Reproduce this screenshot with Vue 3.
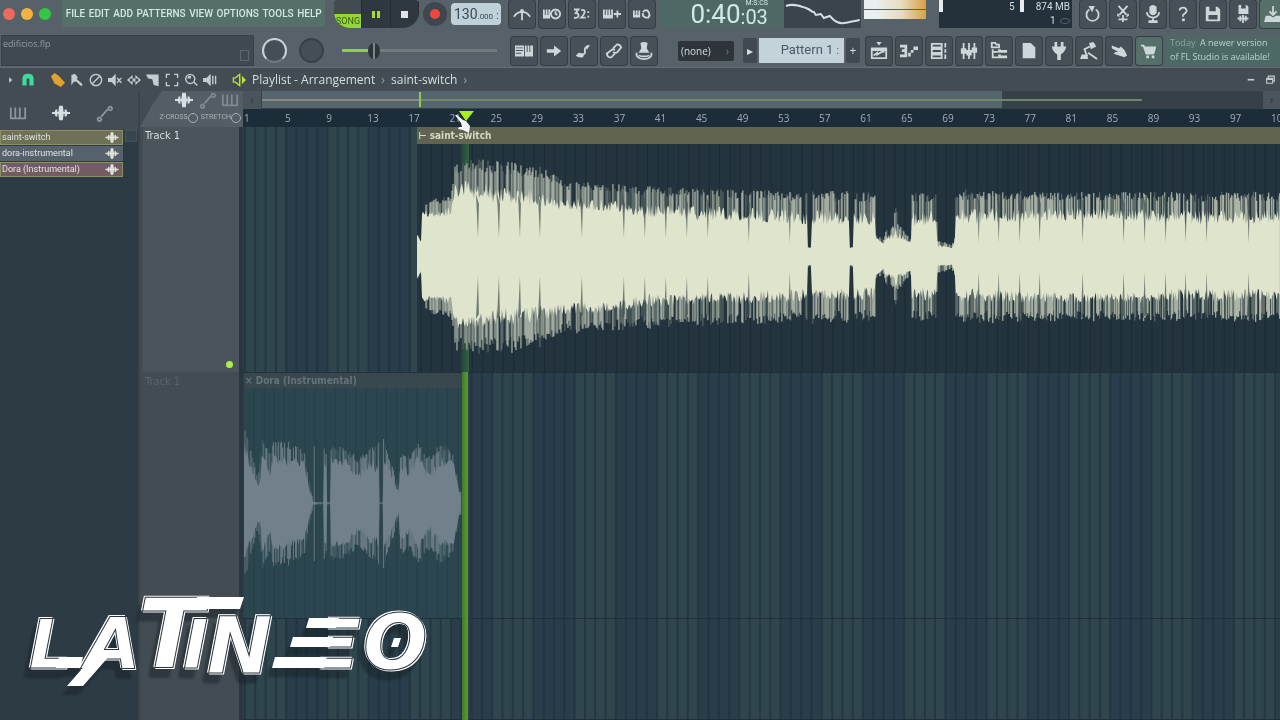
<template>
    <div class="app">
        <header class="toolbar">
            <div class="toolbar-row toolbar-row--top">
                <div class="lights">
                    <button class="light light--red" aria-label="Close"></button>
                    <button class="light light--amber" aria-label="Minimize"></button>
                    <button class="light light--green" aria-label="Zoom"></button>
                </div>
                <nav class="menu">
                    <button v-for="item in menu" :key="item">{{ item }}</button>
                </nav>
                <div class="transport">
                    <button class="song"><span>SONG</span></button>
                    <button class="pause" aria-label="Pause"><i></i><i></i></button>
                    <button class="stop" aria-label="Stop"><i></i></button>
                </div>
                <button class="record" aria-label="Record"></button>
                <div class="tempo"><span>130</span><small>.000</small><b>:</b></div>
                <div class="tools tools--first">
                    <button v-for="name in topTools" :key="name" :aria-label="name" class="tool">
                        <Icon :name="name" />
                    </button>
                </div>
                <div class="clock">
                    <span class="clock-main">0:40</span>
                    <span class="clock-side"><small>M:S:CS</small>:03</span>
                </div>
                <svg class="scope" viewBox="0 0 77 28">
                    <path d="M2 6C9 3 16 6 22 8S27 12 30 12L32 15L37 14L40 18L46 16L50 20C57 26 64 22 76 20" />
                </svg>
                <div class="meter"><i></i><i></i></div>
                <div class="stats">
                    <span class="stats-cpu"><i></i><b>5</b></span>
                    <span class="stats-mem"><i></i><b>874 MB</b><b>1 <em></em></b></span>
                </div>
                <div class="tools">
                    <button
                        v-for="name in fileTools"
                        :key="name"
                        :aria-label="name"
                        :class="['tool', { 'tool--teal': name === 'download' }]"
                    >
                        <Icon :name="name" />
                    </button>
                </div>
            </div>

            <div class="toolbar-row toolbar-row--bottom">
                <div class="hint"><span>edificios.flp</span><i></i></div>
                <div class="knobs"><i class="knob knob--lit"></i><i class="knob"></i></div>
                <input v-model="volume" class="slider" type="range" aria-label="Main volume" />
                <div class="tools tools--first">
                    <button v-for="name in editTools" :key="name" :aria-label="name" class="tool">
                        <Icon :name="name" />
                    </button>
                </div>
                <div class="snap">
                    <select aria-label="Snap">
                        <option>(none)</option>
                    </select>
                    <i>›</i>
                </div>
                <div class="pattern">
                    <button aria-label="Pattern menu">▸</button>
                    <output>Pattern 1<small>:</small></output>
                    <button aria-label="Add pattern">+</button>
                </div>
                <div class="tools">
                    <button
                        v-for="name in windowTools"
                        :key="name"
                        :aria-label="name"
                        :class="['tool', { 'tool--teal': name === 'cart' }]"
                    >
                        <Icon :name="name" />
                    </button>
                </div>
                <p class="news"><span>Today</span>&nbsp; A newer version<br />of FL Studio is available!</p>
            </div>
        </header>

        <div class="titlebar">
            <button
                v-for="tool in playlistTools"
                :key="tool.name"
                :aria-label="tool.name"
                :class="['mini', tool.tone]"
            >
                <Icon :name="tool.name" />
            </button>
            <h1>Playlist - Arrangement <i>›</i> saint-switch <i>›</i></h1>
            <div class="window-buttons">
                <button class="mini" aria-label="Minimize"><Icon name="minimize" /></button>
                <button class="mini" aria-label="Restore"><Icon name="restore" /></button>
            </div>
        </div>

        <main class="playlist">
            <aside class="picker">
                <div class="picker-tabs">
                    <button class="dim" aria-label="Patterns"><Icon name="keys" /></button>
                    <button aria-label="Audio"><Icon name="wave" /></button>
                    <button class="dim" aria-label="Automation"><Icon name="automation" /></button>
                </div>
                <ul>
                    <li v-for="clip in clips" :key="clip.name" :class="`clip-item clip-item--${clip.tone}`">
                        <span>{{ clip.name }}</span>
                        <Icon name="wave" />
                    </li>
                </ul>
                <div class="picker-scroll"></div>
            </aside>

            <section class="tracks">
                <div class="track-tools">
                    <div class="track-tabs">
                        <button aria-label="Audio"><Icon name="wave" /></button>
                        <button class="dim" aria-label="Automation"><Icon name="automation" /></button>
                        <button class="dim" aria-label="Patterns"><Icon name="keys" /></button>
                    </div>
                    <div class="track-options">
                        <label>Z-CROSS<input type="checkbox" /></label>
                        <label>STRETCH<input type="checkbox" /></label>
                    </div>
                </div>
                <div class="track"><span>Track 1</span><i></i></div>
                <div class="track track--off"><span>Track 1</span></div>
                <div class="track track--off"></div>
            </section>

            <section class="timeline">
                <div class="scrollbar">
                    <button aria-label="Scroll left">‹</button>
                    <div class="scroll-track">
                        <div class="scroll-thumb"></div>
                        <i class="overview overview--past"></i>
                        <i class="overview overview--next"></i>
                        <i class="overview-mark"></i>
                    </div>
                    <button aria-label="Scroll right">›</button>
                </div>
                <div class="ruler">
                    <span v-for="bar in bars" :key="bar">{{ bar }}</span>
                </div>
                <div class="lanes">
                    <svg class="grid" viewBox="0 0 1037 100" preserveAspectRatio="none">
                        <rect v-for="n in 13" :key="n" :x="2 + (n - 1) * 82.4" width="41.2" height="100" />
                        <path :d="gridLines" />
                    </svg>
                    <div class="lane">
                        <article class="clip clip--main">
                            <h2>⊢ saint-switch</h2>
                            <svg viewBox="0 0 863 228" preserveAspectRatio="none">
                                <path class="shade" :d="mainGrid" />
                                <path class="soft" :d="mainWave.soft" />
                                <path class="spikes" :d="mainWave.spikes" />
                                <path class="body" :d="mainWave.body" />
                                <path class="dips" :d="mainDips" />
                            </svg>
                        </article>
                    </div>
                    <div class="lane">
                        <article class="clip clip--muted">
                            <h2>× Dora (Instrumental)</h2>
                            <svg viewBox="0 0 220 229" preserveAspectRatio="none">
                                <path class="shade" :d="mutedGrid" />
                                <path class="soft" :d="mutedWave.soft" />
                                <path class="spikes" :d="mutedWave.spikes" />
                                <path class="body" :d="mutedWave.body" />
                            </svg>
                        </article>
                    </div>
                    <div class="lane"></div>
                    <div class="playhead">
                        <i class="playhead-over"></i>
                        <i class="playhead-line"></i>
                    </div>
                </div>
                <svg class="playhead-tip" viewBox="0 0 24 24">
                    <path d="M8 2H23L15 12Z" fill="#a6f01c" />
                    <path d="M4 6L6 6L12 11L15 12L19 17L18 24L12 21L7 20L8 18L11 18L10 14Z" fill="#f2f5f5" />
                </svg>
            </section>
        </main>

        <svg class="logo" viewBox="0 0 420 110" role="img" aria-label="Latineo">
            <text>
                <tspan x="4" y="80" font-size="68">L</tspan>
                <tspan x="60" y="80" font-size="72">A</tspan>
                <tspan x="113" y="80" font-size="96">T</tspan>
                <tspan x="158" y="80" font-size="68">I</tspan>
                <tspan x="182" y="85" font-size="78">N</tspan>
                <tspan x="293" y="80" font-size="68">Ξ</tspan>
                <tspan x="338" y="81" font-size="76">O</tspan>
            </text>
            <path
                class="swash"
                d="M34 69H58L55 80H31ZM42 98H58L86 66L70 66ZM172 9H219L215 21H169ZM284 30H314L311 40H281ZM268 49H308L305 59H265ZM250 69H302L299 80H247ZM369 50H376L373 59H366Z"
            />
        </svg>
    </div>
</template>

<script setup>
import { h, ref } from 'vue'

const volume = ref(18)

const menu = ['FILE', 'EDIT', 'ADD', 'PATTERNS', 'VIEW', 'OPTIONS', 'TOOLS', 'HELP']
const topTools = ['metronome', 'wait', 'countdown', 'stepadd', 'loop']
const fileTools = ['undo', 'cut', 'mic', 'help', 'save', 'render', 'download']
const editTools = ['typing', 'arrow', 'slide', 'link', 'stamp']
const windowTools = ['playlist', 'pianoroll', 'rack', 'mixer', 'browser', 'page', 'plugin', 'lamp', 'touch', 'cart']

const playlistTools = [
    { name: 'caret', tone: 'mini--caret' },
    { name: 'magnet', tone: 'mini--green' },
    { name: 'pencil', tone: 'mini--orange' },
    { name: 'brush' },
    { name: 'ban' },
    { name: 'mute' },
    { name: 'slip' },
    { name: 'slice' },
    { name: 'select' },
    { name: 'zoom' },
    { name: 'playback' },
    { name: 'speaker', tone: 'mini--lime' }
]

const clips = [
    { name: 'saint-switch', tone: 'olive' },
    { name: 'dora-instrumental', tone: 'slate' },
    { name: 'Dora (Instrumental)', tone: 'rose' }
]

const bars = Array.from({ length: 26 }, (_, i) => 1 + i * 4)

// [filled path, stroked path] on a 20 x 20 box
const icons = {
    metronome: ['M8 5H12V9H8Z', 'M10 5V17M1 13Q5 7 10 8Q15 7 19 13'],
    wait: ['M0 5H2V11H3V5H5V11H6V5H8V15H0Z', 'M14 5A5 5 0 1 1 13.9 5M14 7V10L16 11'],
    countdown: ['', 'M1 5H6L3 9Q7 9 6 13Q4 15 1 14M9 6Q13 4 13 8Q12 11 9 14H14M17 7V9M17 12V14'],
    stepadd: ['M0 5H2V11H3V5H5V11H6V5H8V11H9V5H11V15H0Z', 'M12 10H20M16 6V14'],
    loop: ['M0 6H2V11H3V6H5V11H6V6H8V14H0Z', 'M11 8L13 6H16L18 9V12M19 11L17 14H14L11 12V9'],
    undo: ['M5 1L12 1L9 8Z', 'M6 5A6.8 6.8 0 1 0 13 5'],
    cut: ['', 'M5 1L14 11M15 1L6 11M6 12A1 1 0 1 1 5 10M14 12A1 1 0 1 0 15 10M10 11V19M5 16H15'],
    mic: ['M6 2Q10 -2 14 2V9Q10 14 6 9ZM5 17H15V20H5Z', 'M3 8Q4 14 10 14Q16 14 17 8M10 13V18'],
    help: ['M9 15H12V18H9Z', 'M6 6Q7 3 10 3Q14 3 14 7Q13 9 10 11V13'],
    save: ['M2 2H15L18 5V18H2ZM6 2V7H13V2ZM5 11V16H15V11Z', ''],
    render: ['M5 0H14L16 2V10H5ZM8 0V4H13V0Z', 'M10 11V20M4 15H16M7 12V18M13 12V18'],
    download: ['M2 12H7L10 14L13 12H18L20 19H0Z', 'M10 1V11M6 7L10 11L14 7'],
    typing: ['M11 4H13V11H14V4H16V11H17V4H20V16H11ZM0 4H10V16H0ZM1 6V7H9V6ZM1 9V10H9V9ZM1 12V13H7V12Z', ''],
    arrow: ['M2 8H10V4L18 10L10 16V12H2Z', ''],
    slide: ['M4 12L10 13L9 17Q3 18 1 15ZM12 5L17 3L13 9Z', 'M6 15Q12 14 11 10Q10 6 15 4'],
    link: ['', 'M9 7L13 3Q16 2 18 6L14 11Q11 13 9 11M11 9Q9 7 7 9L2 13Q3 18 7 17L11 13'],
    stamp: ['M6 1Q10 -1 14 1L13 7L16 12H4L7 7Z', 'M2 12Q0 18 10 19Q20 18 18 12M4 15Q10 17 16 15'],
    playlist: ['M7 0H13L10 4ZM1 6H19V10H1Z', 'M2 8V18H18V8M4 15L8 12V14L13 11H16'],
    pianoroll: ['M0 3H8V17H0V14H5V11H2V8H5V6H0ZM9 12H12V16H9ZM12 9H15V12H12ZM15 5H20V9H15Z', ''],
    rack: ['', 'M2 2H13V6H2ZM2 8H13V12H2ZM2 14H13V18H2ZM17 1V6M17 8V12M17 14V19'],
    mixer: ['', 'M4 1V19M10 1V19M16 1V19M2 8H6V12H2ZM8 10H12V14H8ZM14 7H18V11H14Z'],
    browser: ['M9 8H12V9H19V12H9ZM9 14H12V15H19V18H9Z', 'M2 1H6L7 3H10V6H2ZM3 8V17H9M3 11H9'],
    page: ['M3 1H12L17 6V18H3Z', ''],
    plugin: ['M5 0H8V5H12V0H15V5H18Q17 11 12 14V20H8V14Q3 11 2 5H5Z', ''],
    lamp: ['M10 1L15 0L18 5L12 8ZM2 14H8L9 19H0Z', 'M11 5L5 8L8 16M9 12L19 19'],
    touch: ['M2 4L10 7L12 5L16 9L19 15L16 17L10 15L4 13L6 11L9 11L2 7Z', ''],
    cart: ['M5 5H18L16 13H7ZM7 15H10V18H7ZM13 15H16V18H13Z', 'M1 4H4L7 13H15'],
    caret: ['M7 4L14 10L7 16Z', ''],
    magnet: ['M2 18V8Q2 1 10 1Q18 1 18 8V18H12V9Q10 6 8 9V18Z', ''],
    pencil: ['M0 5L5 0L11 4L20 14L14 20L5 15Z', 'M3 3L15 16'],
    brush: ['M2 3L7 1L11 6L10 9L18 16L16 19L9 12L5 13L2 18Z', ''],
    ban: ['', 'M10 2A8 8 0 1 1 9.9 2M5 15L15 5'],
    mute: ['M0 7H5L11 1V19L5 13H0Z', 'M13 7L19 14M19 7L13 14'],
    slip: ['M0 10L8 3V17ZM20 10L12 3V17ZM4 8H16V12H4Z', ''],
    slice: ['M0 2H18V19L11 17L9 9L3 8Z', ''],
    select: ['', 'M2 7V2H7M13 2H18V7M18 13V18H13M7 18H2V13'],
    zoom: ['M5 8H10V4Q5 3 5 8Z', 'M9 2A6.5 6.5 0 1 1 8.9 2M14 13L19 18'],
    playback: ['M0 7H5L11 1V19L5 13H0ZM13 4H15V16H13ZM17 4H19V16H17Z', ''],
    speaker: ['M14 4L20 10L14 16Z', 'M2 7H5L11 2V18L5 13H2Z'],
    minimize: ['M3 8H15V11H3Z', ''],
    restore: ['', 'M6 7V3H17V12H14M3 7H14V16H3ZM3 9H14'],
    keys: ['', 'M2 4V16H18V4M7 4V15M12 4V15'],
    wave: ['M0 9H3L4 6H6V9H7L8 2H12L13 9H14V6H16L17 9H20V11H17L16 14H14V11H13L12 18H8L7 11H6V14H4L3 11H0Z', ''],
    automation: ['', 'M5 15A2 2 0 1 1 4.9 15M7 14L14 6M17 3A2 2 0 1 1 16.9 3']
}

const Icon = ({ name }) =>
    h('svg', { viewBox: '0 0 20 20', width: 18, height: 18, 'aria-hidden': 'true' }, [
        h('path', { d: icons[name][0], fill: 'currentColor', 'fill-rule': 'evenodd' }),
        h('path', { d: icons[name][1], fill: 'none', stroke: 'currentColor', 'stroke-width': 2 })
    ])
Icon.props = ['name']

const lines = (start, width) => {
    let d = ''
    for (let x = start; x < width; x += 10.3) d += `M${x.toFixed(1)} 0V300`
    return d
}
const gridLines = lines(2, 1037)
const mainGrid = lines(4, 863)
const mutedGrid = lines(10, 220)

// linear interpolation through [x, solid, peak] points
const sample = (points, x, key) => {
    const i = points.findIndex(p => p[0] > x)
    if (i < 0) return points[points.length - 1][key]
    if (i === 0) return points[0][key]
    const [a, b] = [points[i - 1], points[i]]
    return a[key] + ((b[key] - a[key]) * (x - a[0])) / (b[0] - a[0])
}

const buildWave = (points, width, mid, seed) => {
    let state = seed
    const rand = () => {
        state = (state * 16807) % 2147483647
        return state / 2147483647
    }
    const top = []
    const bottom = []
    let soft = ''
    let spikes = ''
    for (let x = 0; x <= width; x += 1) {
        const solid = sample(points, x, 1)
        const peak = sample(points, x, 2)
        const up = solid + (peak - solid) * rand() * 0.45
        const down = solid + (peak - solid) * rand() * 0.4 - 1
        top.push(`${x} ${(mid - up).toFixed(1)}`)
        bottom.unshift(`${x} ${(mid + down).toFixed(1)}`)
        const reach = solid + (peak - solid) * (0.7 + rand() * 0.3)
        const line = `M${x} ${(mid - reach).toFixed(1)}V${(mid + reach * (0.94 + rand() * 0.08)).toFixed(1)}`
        const pick = rand()
        if (pick < 0.42) spikes += line
        else if (pick < 0.72) soft += line
    }
    return { body: `M${top.join('L')}L${bottom.join('L')}Z`, soft, spikes }
}

const mainWave = buildWave(
    [
        [0, 22, 24], [4, 15, 16], [5, 38, 56], [34, 40, 62], [38, 60, 92], [50, 60, 98],
        [80, 52, 97], [120, 50, 92], [150, 46, 76], [190, 46, 74], [230, 38, 71], [310, 36, 68],
        [390, 32, 66], [391, 9, 10], [394, 9, 10], [395, 32, 66], [432, 32, 66], [433, 9, 10],
        [436, 9, 10], [437, 32, 65], [458, 30, 65], [459, 18, 22], [467, 12, 18], [469, 17, 28],
        [477, 18, 32], [479, 20, 58], [481, 18, 34], [494, 14, 18], [495, 30, 65], [519, 32, 64],
        [521, 9, 18], [535, 8, 12], [538, 16, 20], [539, 32, 68], [640, 36, 65], [720, 36, 65],
        [760, 32, 65], [863, 33, 66]
    ],
    863, 113, 4127
)

const mutedWave = buildWave(
    [
        [0, 50, 78], [8, 30, 52], [14, 17, 24], [17, 17, 50], [18, 46, 66], [26, 26, 50],
        [30, 42, 62], [46, 36, 62], [60, 34, 56], [66, 10, 24], [70, 1, 2], [71, 1, 62],
        [72, 1, 1], [80, 1, 1], [81, 34, 58], [83, 34, 50], [84, 1, 1], [87, 1, 1],
        [88, 38, 58], [103, 38, 56], [116, 20, 46], [130, 36, 58], [134, 24, 60], [136, 40, 66],
        [137, 1, 1], [140, 1, 1], [141, 40, 66], [156, 10, 18], [158, 34, 50], [168, 24, 52],
        [176, 42, 62], [186, 20, 46], [200, 36, 62], [212, 36, 50], [218, 8, 12], [220, 8, 12]
    ],
    219, 115, 991
)

const mainDips = [59, 80, 101, 121, 163, 205, 226, 247, 268, 289, 330, 371, 560, 580, 601, 621, 664, 705, 726, 747, 767, 788, 830]
    .map(x => `M${x} 50L${x + 2} ${x < 300 ? 94 : 99}L${x + 3} 60ZM${x} 175L${x + 2} ${x < 300 ? 132 : 128}L${x + 3} 170Z`)
    .join('')
</script>

<style>
body {
    background: #2f3d47;
    margin: 0;
}
</style>

<style scoped>
.app {
    position: relative;
    display: flex;
    flex-direction: column;
    height: 100vh;
    min-height: 640px;
    overflow: hidden;
    color: #d5dfe1;
    font: 12px/16px "Open Sans", sans-serif;
    background: #2f3d47;
}

button,
input,
select {
    padding: 0;
    border: 0;
    margin: 0;
    font: inherit;
    color: inherit;
    background: none;
}

.toolbar {
    background: #566168;
    border-bottom: 1px solid #626d73;
}

.toolbar-row {
    display: flex;
    align-items: center;
}

.toolbar-row--top {
    height: 34px;
    align-items: flex-start;
}

.toolbar-row--bottom {
    height: 33px;
}

.lights {
    display: flex;
    gap: 6px;
    width: 62px;
    padding: 8px 0 0 3px;
    box-sizing: border-box;
}

.light {
    width: 12px;
    height: 12px;
    border-radius: 50%;
}

.light--red {
    background: #ed6a5e;
}

.light--amber {
    background: #f4b23f;
}

.light--green {
    background: #32c748;
}

.menu {
    display: flex;
    justify-content: space-between;
    width: 264px;
    height: 27px;
    padding: 0 3px 0 4px;
    box-sizing: border-box;
    border-radius: 0 0 4px 4px;
    font: 500 10px/27px Roboto, sans-serif;
    color: #d3e8e2;
    background: #547069;
}

.transport {
    display: flex;
    width: 86px;
    height: 28px;
    margin-left: 9px;
    overflow: hidden;
    border-radius: 4px 4px 16px 16px;
    background: #30383f;
}

.transport button {
    display: flex;
    flex: 1;
    align-items: center;
    justify-content: center;
    gap: 2px;
    min-width: 0;
    border-right: 1px solid #242b31;
}

.transport .song {
    align-items: flex-end;
    background: #414b50;
}

.song span {
    width: 100%;
    padding-left: 1px;
    font: 9px/14px Roboto, sans-serif;
    color: #3c5a16;
    background: #93d835;
}

.pause i {
    width: 3px;
    height: 7px;
    background: #a5dc35;
}

.stop i {
    width: 7px;
    height: 7px;
    background: #dfe5e6;
}

.record {
    width: 24px;
    height: 24px;
    margin: 2px 4px 0 4px;
    border: 7px solid #3e474e;
    border-radius: 50%;
    background: #ef4740;
}

.tempo {
    display: flex;
    align-items: baseline;
    justify-content: center;
    width: 50px;
    height: 22px;
    margin-top: 3px;
    border-radius: 4px;
    font: 14px/22px Roboto, sans-serif;
    color: #3a4a55;
    background: #c0d0d8;
}

.tempo small {
    font-size: 8px;
}

.tempo b {
    margin-left: 3px;
    font-size: 10px;
    font-weight: 400;
}

.tools {
    display: flex;
    gap: 4px;
}

.tools--first {
    margin-left: 8px;
}

.tool {
    display: flex;
    align-items: center;
    justify-content: center;
    width: 26px;
    height: 28px;
    border-radius: 3px;
    box-shadow: 0 0 0 1px #353e44;
    color: #cdd6d8;
    background: #465056;
}

.tool--teal {
    background: #547069;
}

.clock {
    display: flex;
    flex: 1;
    align-items: flex-end;
    justify-content: center;
    min-width: 110px;
    height: 28px;
    padding-left: 15px;
    margin-left: 4px;
    font-family: Roboto, sans-serif;
    color: #d3e8e5;
    background: #4e6965;
}

.clock-main {
    font-size: 26px;
    line-height: 28px;
}

.clock-side {
    display: flex;
    flex-direction: column;
    font-size: 20px;
    line-height: 21px;
}

.clock-side small {
    align-self: flex-end;
    font: 7px/7px Roboto, sans-serif;
}

.scope {
    width: 77px;
    height: 28px;
    background: #3a444c;
}

.scope path {
    fill: none;
    stroke: #d5dfe1;
    stroke-width: 2;
}

.meter {
    display: flex;
    flex-direction: column;
    gap: 1px;
    width: 62px;
    margin: 0 13px 0 3px;
}

.meter i {
    height: 9px;
    background: linear-gradient(90deg, #e9efee 20%, #e8dcc0 60%, #d8a047);
}

.stats {
    display: flex;
    width: 134px;
    height: 28px;
    font: 10px/14px Roboto, sans-serif;
    background: #25313a;
}

.stats i {
    width: 4px;
    height: 12px;
    background: #e6eced;
}

.stats b {
    font-weight: 400;
}

.stats-cpu {
    display: flex;
    justify-content: space-between;
    width: 76px;
}

.stats-mem {
    display: grid;
    flex: 1;
    grid-template-columns: 14px 1fr;
    justify-items: end;
    padding: 0 2px 0 0;
}

.stats-mem i {
    justify-self: start;
    margin-left: 5px;
}

.stats-mem b:last-child {
    grid-column: 2;
}

.stats em {
    display: inline-block;
    width: 8px;
    height: 4px;
    margin-left: 2px;
    border: 1px solid #56636b;
    border-radius: 50%;
}

.stats + .tools {
    margin-left: 8px;
    margin-right: -6px;
}

.hint {
    display: flex;
    align-items: flex-end;
    justify-content: space-between;
    width: 246px;
    height: 29px;
    padding: 0 4px 0 1px;
    margin-left: 1px;
    font: 9px/16px "Open Sans", sans-serif;
    color: #8f9ba0;
    background: #404950;
    border: 1px solid #384147;
}

.hint span {
    align-self: flex-start;
}

.hint i {
    width: 7px;
    height: 9px;
    margin-bottom: 4px;
    border: 1px solid #5d676d;
}

.knobs {
    display: flex;
    gap: 12px;
    margin-left: 8px;
}

.knob {
    width: 21px;
    height: 21px;
    border: 2px solid #384047;
    border-radius: 50%;
    background: #444e55;
}

.knob--lit {
    border-color: #c9d4d8 #c9d4d8 #6d787e #c9d4d8;
}

.slider {
    width: 155px;
    height: 18px;
    margin-left: 18px;
    appearance: none;
    background: linear-gradient(90deg, #8fd040 28px, #717c81 28px) center / 100% 3px no-repeat;
}

.slider::-webkit-slider-thumb {
    width: 12px;
    height: 16px;
    appearance: none;
    border-radius: 50%;
    background: linear-gradient(90deg, #2c353b 5px, #7c868b 5px 7px, #2c353b 7px);
}

.slider + .tools {
    margin-left: 14px;
}

.snap {
    display: flex;
    align-items: center;
    width: 56px;
    height: 20px;
    margin-left: 21px;
    border-radius: 2px;
    font: 10px/16px "Open Sans", sans-serif;
    background: #2d353b;
}

.snap select {
    flex: 1;
    min-width: 0;
    padding-left: 3px;
    appearance: none;
}

.snap i {
    padding-right: 5px;
    font-style: normal;
    color: #77838a;
}

.pattern {
    display: flex;
    gap: 2px;
    height: 25px;
    margin: 0 6px 0 9px;
}

.pattern button {
    width: 14px;
    border-radius: 2px;
    background: #3f494f;
}

.pattern output {
    width: 80px;
    padding-right: 5px;
    font: 13px/24px Roboto, sans-serif;
    text-align: right;
    color: #4c5b63;
    background: #c4d3da;
}

.pattern small {
    margin-left: 3px;
}

.news {
    flex: 1;
    height: 30px;
    padding: 0 0 0 4px;
    margin: 0 0 0 4px;
    overflow: hidden;
    font: 9px/14px "Open Sans", sans-serif;
    white-space: nowrap;
    color: #b5d6ce;
    background: #4e6965;
}

.news span {
    color: #82a69e;
}

.titlebar {
    display: flex;
    align-items: center;
    height: 23px;
    padding-left: 2px;
    background: #434b53;
}

.mini {
    display: flex;
    justify-content: center;
    width: 19px;
    color: #c3cccf;
}

.mini :deep(svg) {
    width: 14px;
    height: 14px;
}

.mini--caret {
    width: 17px;
}

.mini--caret :deep(svg) {
    width: 9px;
}

.mini--green {
    width: 18px;
    color: #3ddc9c;
}

.mini--orange {
    margin-left: 11px;
    color: #e0a22f;
}

.mini--lime {
    margin-left: 10px;
    color: #b5e32c;
}

.titlebar h1 {
    flex: 1;
    margin: 0 0 0 4px;
    font-size: 12px;
    font-weight: 400;
    white-space: nowrap;
}

.titlebar h1 i {
    margin: 0 3px;
    font-style: normal;
    color: #9aa5aa;
}

.window-buttons {
    display: flex;
}

.window-buttons :deep(svg) {
    width: 11px;
}

.playlist {
    display: grid;
    flex: 1;
    grid-template-columns: 140px 103px 1fr;
    min-height: 0;
}

.picker {
    display: grid;
    grid-template-rows: 39px 1fr;
    grid-template-columns: 123px 15px;
    border-right: 2px solid #38444c;
    background: #2d3b45;
}

.picker-tabs {
    display: flex;
    grid-column: 1 / 3;
    align-items: center;
    gap: 25px;
    padding: 8px 0 0 9px;
    background: #434b53;
}

.dim {
    opacity: 0.5;
}

.picker ul {
    padding: 0;
    margin: 0;
    list-style: none;
}

.clip-item {
    display: flex;
    align-items: center;
    justify-content: space-between;
    height: 13px;
    padding: 0 1px;
    margin-bottom: 1px;
    border: 1px solid #8b8f61;
    font: 9px/13px Roboto, sans-serif;
    color: #dfe3da;
}

.clip-item--olive {
    background: #6e7157;
}

.clip-item--slate {
    border-color: #56636e;
    background: #56616e;
}

.clip-item--rose {
    background: #735c61;
}

.clip-item :deep(svg) {
    height: 13px;
}

.picker-scroll {
    width: 10px;
    height: 10px;
    justify-self: center;
    border: 1px solid #47535b;
    background: #38454e;
}

.tracks {
    display: grid;
    grid-template-rows: 36px 246px 246px 1fr;
    border-right: 4px solid #2a3640;
    background: #434b53;
}

.track-tools {
    position: relative;
    z-index: 1;
    margin-right: -4px;
    background: #525d64;
    clip-path: polygon(22px 0, 100% 0, 100% 100%, 0 100%, 12px 14px);
}

.track-tabs {
    display: flex;
    gap: 5px;
    justify-content: flex-end;
    height: 18px;
    padding-right: 4px;
}

.track-tabs .dim {
    opacity: 0.35;
}

.track-options {
    display: flex;
    gap: 3px;
    justify-content: flex-end;
    padding-right: 2px;
}

.track-options label {
    display: flex;
    align-items: center;
    font: 7px/17px Roboto, sans-serif;
    color: #aab4b8;
}

.track-options input {
    width: 10px;
    height: 10px;
    appearance: none;
    border: 1px solid #a5b0b5;
    border-radius: 50%;
}

.track {
    display: flex;
    flex-direction: column;
    justify-content: space-between;
    padding: 1px 8px 4px 2px;
    margin-left: 3px;
    border-bottom: 1px solid #414c53;
    font: 11px/16px "DejaVu Sans Condensed", sans-serif;
    background: #4a545b;
}

.track--off {
    background: #424c52;
}

.track--off span {
    color: #59646a;
}

.track i {
    align-self: flex-end;
    width: 7px;
    height: 7px;
    margin-right: -2px;
    border-radius: 50%;
    background: #aaf04a;
}

.timeline {
    position: relative;
    display: grid;
    grid-template-rows: 18px 18px 1fr;
    min-width: 0;
}

.scrollbar {
    display: grid;
    grid-template-columns: 18px 1fr 17px;
    background: #354047;
}

.scrollbar button {
    line-height: 14px;
    color: #2d373d;
    background: #4a545b;
}

.scroll-track {
    position: relative;
    margin: 0 1px;
}

.scroll-thumb {
    width: 74%;
    height: 17px;
    background: #55666e;
}

.overview {
    position: absolute;
    top: 8px;
    height: 2px;
}

.overview--past {
    left: 0;
    width: 16%;
    background: #8c8583;
}

.overview--next {
    left: 16%;
    width: 72%;
    background: #71846c;
}

.overview-mark {
    position: absolute;
    top: 1px;
    left: 16%;
    width: 2px;
    height: 15px;
    margin-left: -3px;
    background: #93c94a;
}

.ruler {
    display: grid;
    grid-template-columns: repeat(25, minmax(0, 1fr)) 9px;
    padding-left: 1px;
    overflow: hidden;
    font: 10px/18px "Open Sans", sans-serif;
    color: #9faeb5;
    background: #1c2c38;
}

.lanes {
    position: relative;
    display: grid;
    grid-template-rows: 246px 246px 1fr;
    min-height: 0;
    background: #293e4a;
}

.grid {
    position: absolute;
    width: 100%;
    height: 100%;
}

.grid rect {
    fill: #30464f;
}

.grid path {
    fill: none;
    stroke: #20323d;
    stroke-width: 2;
    opacity: 0.7;
}

.lane {
    position: relative;
    border-bottom: 1px solid #1d303b;
}

.clip {
    position: absolute;
    top: 0;
    display: flex;
    flex-direction: column;
    height: 100%;
}

.clip--main {
    right: 0;
    left: 17%;
    margin-left: -2px;
    background: #23343e;
}

.clip--muted {
    left: 0;
    width: 21%;
    padding-right: 1px;
    margin-left: 1px;
    background: #2b464f;
}

.clip h2 {
    padding-left: 1px;
    margin: 0;
    font: 700 10px/17px "DejaVu Sans Condensed", sans-serif;
    color: #d5d9c6;
    background: #606450;
}

.clip--muted h2 {
    line-height: 15px;
    color: #66737a;
    background: #39474f;
}

.clip svg {
    flex: 1;
    width: 100%;
    min-height: 0;
}

.shade {
    stroke: #1c2b35;
}

.clip--muted .shade {
    stroke: #263f49;
}

.body {
    fill: #dfe5cd;
}

.soft,
.spikes {
    fill: none;
    stroke: #dfe5cd;
    stroke-width: 1;
    opacity: 0.35;
}

.spikes {
    opacity: 0.85;
}

.dips {
    fill: #42504f;
    opacity: 0.7;
}

.clip--muted .body {
    fill: #71808a;
}

.clip--muted .soft,
.clip--muted .spikes {
    stroke: #71808a;
}

.playhead {
    position: absolute;
    top: 0;
    bottom: 0;
    left: 21%;
    display: flex;
    flex-direction: column;
    align-items: center;
    width: 8px;
}

.playhead-over {
    width: 8px;
    height: 245px;
    background: linear-gradient(90deg, #24421f, #2f6420);
    mix-blend-mode: lighten;
}

.playhead-line {
    flex: 1;
    width: 6px;
    background: linear-gradient(90deg, #3f7a2b, #5a9e2c);
}

.playhead-tip {
    position: absolute;
    top: 18px;
    left: 21%;
    width: 24px;
    height: 24px;
    margin-left: -10px;
}

.logo {
    position: absolute;
    bottom: 22px;
    left: 25px;
    width: 420px;
    height: 110px;
    overflow: visible;
    filter: drop-shadow(-5px 9px 1px rgba(20, 30, 36, 0.45));
}

.logo text {
    font-family: "DejaVu Sans", sans-serif;
    font-weight: 700;
    font-style: oblique;
    fill: #fff;
    stroke: #28343c;
    stroke-width: 1;
    filter: drop-shadow(1px 1px 0 #fff) drop-shadow(-1px -1px 0 #fff);
}

.swash {
    fill: #fff;
}
</style>
